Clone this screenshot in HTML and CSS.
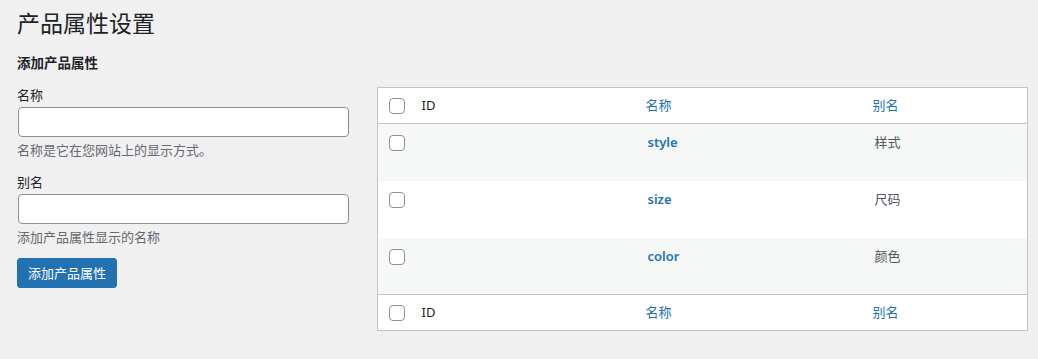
FILE: index.html
```html
<!DOCTYPE html>
<html lang="zh-CN">
<head>
    <meta charset="UTF-8">
    <meta name="viewport" content="width=device-width, initial-scale=1.0">
    <title>产品属性设置</title>
    <link rel="stylesheet" href="styles.css">
</head>
<body>
    <div class="wrap">
        <h1 class="page-title">产品属性设置</h1>

        <div class="columns">
            <div class="col-left">
                <h2 class="form-title">添加产品属性</h2>

                <div class="form-field">
                    <label for="attr-name">名称</label>
                    <input type="text" id="attr-name">
                    <p class="help">名称是它在您网站上的显示方式。</p>
                </div>

                <div class="form-field">
                    <label for="attr-slug">别名</label>
                    <input type="text" id="attr-slug">
                    <p class="help">添加产品属性显示的名称</p>
                </div>

                <button class="btn-primary">添加产品属性</button>
            </div>

            <div class="col-right">
                <table class="list-table">
                    <thead>
                        <tr>
                            <th class="check-col"><span class="checkbox"></span></th>
                            <th class="col-id">ID</th>
                            <th class="col-name"><a href="#">名称</a></th>
                            <th class="col-slug"><a href="#">别名</a></th>
                        </tr>
                    </thead>
                    <tbody>
                        <tr class="alt">
                            <td class="check-col"><span class="checkbox"></span></td>
                            <td class="col-id"></td>
                            <td class="col-name"><a href="#" class="row-title">style</a></td>
                            <td class="col-slug">样式</td>
                        </tr>
                        <tr>
                            <td class="check-col"><span class="checkbox"></span></td>
                            <td class="col-id"></td>
                            <td class="col-name"><a href="#" class="row-title">size</a></td>
                            <td class="col-slug">尺码</td>
                        </tr>
                        <tr class="alt">
                            <td class="check-col"><span class="checkbox"></span></td>
                            <td class="col-id"></td>
                            <td class="col-name"><a href="#" class="row-title">color</a></td>
                            <td class="col-slug">颜色</td>
                        </tr>
                    </tbody>
                    <tfoot>
                        <tr>
                            <th class="check-col"><span class="checkbox"></span></th>
                            <th class="col-id">ID</th>
                            <th class="col-name"><a href="#">名称</a></th>
                            <th class="col-slug"><a href="#">别名</a></th>
                        </tr>
                    </tfoot>
                </table>
            </div>
        </div>
    </div>
</body>
</html>
```

FILE: styles.css
```css
body {
    margin: 0;
    background: #f0f0f1;
    color: #1d2327;
    font-family: "Noto Sans", "Noto Sans CJK SC", sans-serif;
    font-size: 13px;
    line-height: 1.4;
}

.wrap {
    padding: 8px 10px 0 17px;
}

.page-title {
    margin: 0;
    font-size: 23px;
    font-weight: 400;
    line-height: 30px;
    color: #1d2327;
}

.columns {
    display: flex;
    align-items: flex-start;
    gap: 29px;
}

.col-left {
    width: 331px;
    flex: none;
}

.col-right {
    flex: 1;
    padding-top: 49px;
}

.form-title {
    margin: 14px 0 0;
    font-size: 13.5px;
    font-weight: 700;
    line-height: 22px;
}

.form-field {
    margin-top: 11px;
}

.form-field + .form-field {
    margin-top: 12px;
}

.form-field label {
    display: block;
    line-height: 20px;
    margin-bottom: 2px;
}

.form-field input {
    display: block;
    box-sizing: border-box;
    width: 100%;
    height: 30px;
    margin: 0 0 0 1px;
    border: 1px solid #8c8f94;
    border-radius: 4px;
    background: #fff;
    font: inherit;
}

.help {
    margin: 3px 0 0;
    color: #646970;
    line-height: 20px;
}

.btn-primary {
    margin-top: 11px;
    height: 30px;
    padding: 0 10px;
    border: 1px solid #2271b1;
    border-radius: 3px;
    background: #2271b1;
    color: #fff;
    font: inherit;
    cursor: pointer;
}

.list-table {
    width: 100%;
    border: 1px solid #c3c4c7;
    border-collapse: collapse;
    background: #fff;
    table-layout: fixed;
}

.list-table th,
.list-table td {
    box-sizing: border-box;
    text-align: left;
    vertical-align: top;
    font-weight: 400;
}

.list-table thead tr,
.list-table tfoot tr {
    height: 36px;
}

.list-table tbody tr {
    height: 57px;
}

.list-table thead th,
.list-table tfoot th {
    padding: 0 8px;
    vertical-align: middle;
}

.list-table thead tr {
    border-bottom: 1px solid #c3c4c7;
}

.list-table tfoot tr {
    border-top: 1px solid #c3c4c7;
}

.list-table td {
    padding: 9px 10px;
    color: #50575e;
}

.list-table tr.alt td {
    background: #f6f7f7;
}

.list-table a {
    color: #2271b1;
    text-decoration: none;
}

.row-title {
    font-weight: 600;
}

.check-col {
    width: 36px;
}

.list-table .check-col {
    padding: 0 0 0 11px;
}

.list-table td.check-col {
    padding-top: 11px;
}

.col-id {
    width: 224px;
}

.col-name {
    width: 227px;
}

.checkbox {
    display: block;
    box-sizing: border-box;
    width: 16px;
    height: 16px;
    border: 1px solid #8c8f94;
    border-radius: 4px;
    background: #fff;
}
```
